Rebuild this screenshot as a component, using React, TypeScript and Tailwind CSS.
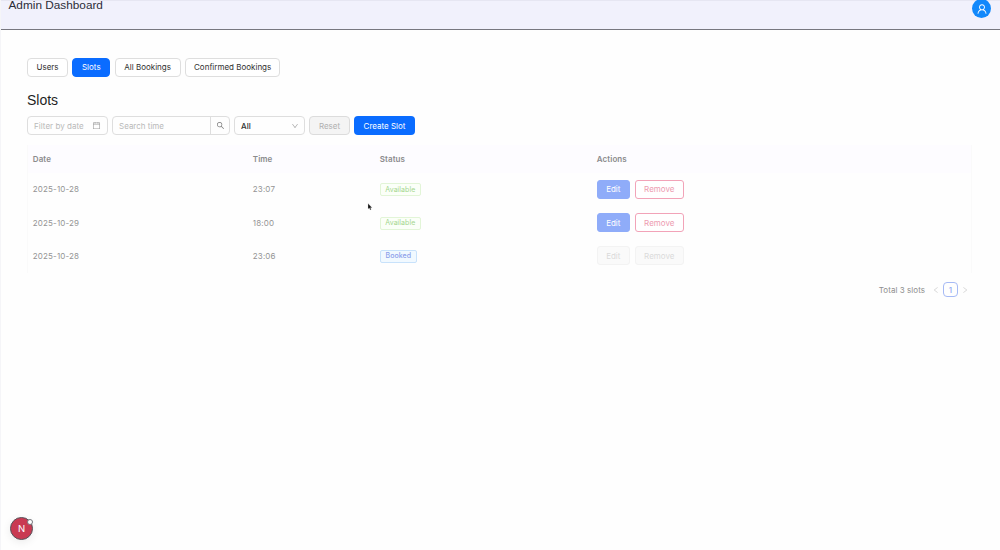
import React from "react";
import clsx from "clsx";
import {
  AiOutlineCalendar,
  AiOutlineDown,
  AiOutlineLeft,
  AiOutlineRight,
  AiOutlineSearch,
  AiOutlineUser,
} from "react-icons/ai";

type Slot = {
  date: string;
  time: string;
  booked: boolean;
};

const slots: Slot[] = [
  { date: "2025-10-28", time: "23:07", booked: false },
  { date: "2025-10-29", time: "18:00", booked: false },
  { date: "2025-10-28", time: "23:06", booked: true },
];

const tabs = [
  { label: "Users", width: "w-[41px]" },
  { label: "Slots", width: "w-[38px]" },
  { label: "All Bookings", width: "w-[66px]" },
  { label: "Confirmed Bookings", width: "w-[95.5px]" },
];

const columns = "grid grid-cols-[220px_127px_217px_1fr] items-center pl-[4.8px]";

function Header() {
  return (
    <header className="flex h-[30px] items-start justify-between border-t border-b border-t-[#e6e6f2] border-b-[#77777f] bg-[#f1f1fc] pr-[9px] pl-[7.5px]">
      <h1 className="-mt-px font-['Liberation_Sans'] text-[11.8px] leading-[11px] text-[#2c2c38]">
        Admin Dashboard
      </h1>
      <div className="-mt-[2px] flex size-[19px] items-center justify-center rounded-full bg-[#1188fb] text-white">
        <AiOutlineUser size={12} />
      </div>
    </header>
  );
}

function Filters() {
  return (
    <div className="mt-[7px] flex h-[19px] items-stretch">
      <div className="flex w-[81px] items-center justify-between rounded-[4px] border border-[#dedede] pr-[6px] pl-[6px] text-[#b9b9b9]">
        <span className="tracking-[0.04px]">Filter by date</span>
        <AiOutlineCalendar size={9} className="text-[#a0a0a0]" />
      </div>
      <div className="ml-[4px] flex w-[118px] rounded-[4px] border border-[#dedede] text-[#b9b9b9]">
        <span className="flex flex-1 items-center border-r border-[#dedede] pl-[6px]">Search time</span>
        <span className="flex w-[18px] items-center justify-center text-[#777777]">
          <AiOutlineSearch size={9} />
        </span>
      </div>
      <div className="ml-[4px] flex w-[71px] items-center justify-between rounded-[4px] border border-[#dedede] pr-[5px] pl-[6px] font-medium text-[#303030]">
        <span>All</span>
        <AiOutlineDown size={8} className="text-[#a8a8a8]" />
      </div>
      <button className="ml-[4px] w-[41px] rounded-[4px] border border-[#dcdcdc] bg-[#f4f4f4] text-[#b0b0b0]">
        Reset
      </button>
      <button className="ml-[4px] w-[61px] rounded-[4px] bg-[#0a6cff] text-white">Create Slot</button>
    </div>
  );
}

function SlotsTable() {
  return (
    <div className="mt-[10px] w-[945px] border-x border-[#fafafa] text-[#949494]">
      <div className={clsx(columns, "h-[27.5px] bg-[#fdfcff] font-semibold text-[#8b8b8d]")}>
        <span className="tracking-[0.08px]">Date</span>
        <span className="tracking-[0.08px]">Time</span>
        <span className="tracking-[0.08px]">Status</span>
        <span className="tracking-[0.08px]">Actions</span>
      </div>
      {slots.map((slot, i) => (
        <div key={i} className={clsx(columns, "h-[33.4px]")}>
          <span className="tracking-[0.15px]">{slot.date}</span>
          <span className="tracking-[0.15px]">{slot.time}</span>
          <span
            className={clsx(
              "mt-px flex h-[13px] items-center justify-center rounded-[2px] border text-[7px] tracking-[0.05px]",
              slot.booked
                ? "w-[37px] border-[#c8e2fb] bg-[#f1f9ff] font-medium text-[#8b9eea]"
                : "w-[41px] border-[#e2f5d7] bg-[#fbfff8] text-[#a5d68f]"
            )}
          >
            {slot.booked ? "Booked" : "Available"}
          </span>
          <div className="flex h-[19px] gap-[5px]">
            <button
              className={clsx(
                "w-[33px] rounded-[3px] border",
                slot.booked
                  ? "border-[#f3f3f3] bg-[#fafafa] text-[#dadada]"
                  : "border-[#8facf9] bg-[#8facf9] text-white"
              )}
            >
              Edit
            </button>
            <button
              className={clsx(
                "w-[49px] rounded-[3px] border",
                slot.booked
                  ? "border-[#f3f3f3] bg-[#fafafa] text-[#dadada]"
                  : "border-[#f2a3b8] bg-white text-[#ed9bb0]"
              )}
            >
              Remove
            </button>
          </div>
        </div>
      ))}
    </div>
  );
}

function Pagination() {
  return (
    <div className="mt-[9.5px] flex h-[15px] w-[942px] items-center justify-end text-[#8f8f8f]">
      <span className="tracking-[0.05px]">Total 3 slots</span>
      <AiOutlineLeft size={8} className="ml-[7px] text-[#d2d2d2]" />
      <span className="ml-[3px] flex h-[15px] w-[15px] items-center justify-center rounded-[4px] border border-[#a6baf5] font-medium text-[#8fa7f2]">
        1
      </span>
      <AiOutlineRight size={8} className="ml-[3px] text-[#d2d2d2]" />
    </div>
  );
}

function App() {
  return (
    <div className="relative flex h-[550px] w-full flex-col overflow-hidden border-l border-[#f5f5f8] bg-[#fefefe] font-['Inter',sans-serif] text-[8px] leading-[12px]">
      <Header />
      <main className="flex-1 pt-[27.5px] pl-[26px]">
        <nav className="flex h-[19px] gap-[4.3px]">
          {tabs.map(({ label, width }) => (
            <button
              key={label}
              className={clsx(
                "rounded-[4px] border",
                width,
                label === "Slots"
                  ? "border-[#0a6cff] bg-[#0a6cff] text-white"
                  : "border-[#dedede] bg-white text-[#303030]"
              )}
            >
              {label}
            </button>
          ))}
        </nav>
        <h2 className="mt-[14.5px] font-['Liberation_Sans'] text-[14px] leading-[18px] text-[#1f1f1f]">Slots</h2>
        <Filters />
        <SlotsTable />
        <Pagination />
      </main>

      {/* dev tools badge */}
      <div className="absolute top-[517px] left-[9px] flex size-[23px] items-center justify-center rounded-full border border-[#55555c] bg-[#c93a52] text-white shadow-[0_2px_8px_#00000014]">
        <span className="text-[9.5px] leading-none">N</span>
        <span className="absolute top-px -right-px size-[6px] rounded-full border border-[#77777c] bg-white" />
      </div>

      <svg className="absolute top-[203px] left-[366px]" width="6" height="8" viewBox="0 0 6 8">
        <path d="M1 .5v5.6l1.3-1.1.9 2 1-.5-.8-1.8h1.7z" fill="#111" stroke="#ddd" strokeWidth=".3" />
      </svg>
    </div>
  );
}

export default App;
